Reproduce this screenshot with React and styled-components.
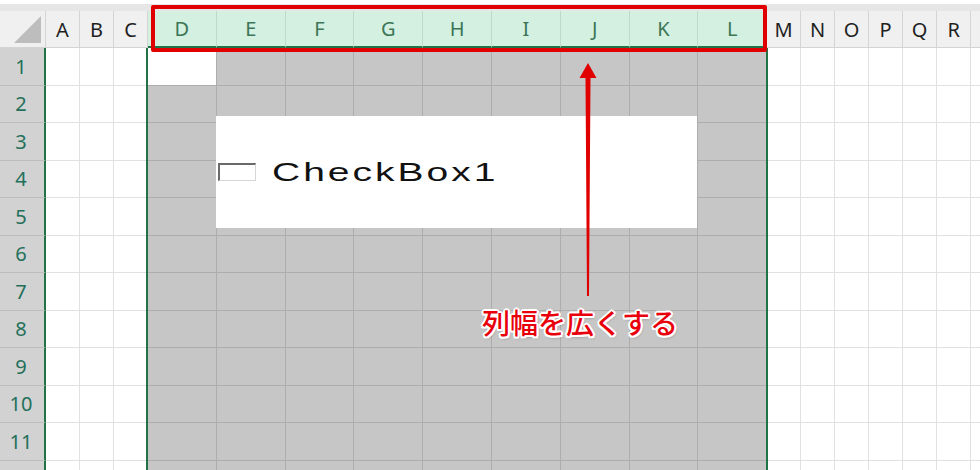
import React from 'react';
import styled, { createGlobalStyle } from 'styled-components';

const GlobalStyle = createGlobalStyle`
  html, body {
    margin: 0;
    padding: 0;
    background: #ffffff;
  }
`;

const Page = styled.div`
  position: relative;
  width: 980px;
  height: 470px;
  overflow: hidden;
  background: #ffffff;
  font-family: "Noto Sans", "Liberation Sans", sans-serif;
`;

const TopStrip = styled.div`
  height: 7px;
  margin-top: 4px;
  background: #e6e6e6;
`;

const Sheet = styled.div`
  display: grid;
  grid-template-columns: 46px repeat(3, 34px) repeat(9, 68.8px) repeat(7, 34px);
  grid-template-rows: 37px repeat(12, 37.5px);
`;

const Corner = styled.div`
  position: relative;
  box-sizing: border-box;
  background: #f0f0f0;
  border-right: 1px solid #d4d4d4;
  border-bottom: 1px solid #d4d4d4;

  &::after {
    content: '';
    position: absolute;
    right: 4px;
    bottom: 4px;
    width: 27px;
    height: 27px;
    background: #bdbdbd;
    clip-path: polygon(100% 0, 100% 100%, 0 100%);
  }
`;

const ColHead = styled.div`
  box-sizing: border-box;
  display: flex;
  align-items: center;
  justify-content: center;
  font-size: 20px;
  background: ${p => (p.$on ? '#d3f0e0' : '#f0f0f0')};
  color: ${p => (p.$on ? '#3c7656' : '#1f1f1f')};
  border-right: 1px solid ${p => (p.$on ? '#bfd9ca' : '#d4d4d4')};
  border-bottom: ${p => (p.$on ? '2px solid #217346' : '1px solid #d4d4d4')};
`;

const RowHead = styled.div`
  box-sizing: border-box;
  display: flex;
  align-items: center;
  justify-content: center;
  padding-right: 2px;
  font-size: 20px;
  background: #d2d2d2;
  color: #23705a;
  border-right: 2px solid #217346;
  border-bottom: 1px solid #bcbcbc;
`;

const Cell = styled.div`
  box-sizing: border-box;
  background: ${p => (p.$active ? '#ffffff' : p.$on ? '#c6c6c6' : '#ffffff')};
  border-right: 1px solid ${p => (p.$on ? '#adadad' : '#e1e1e1')};
  border-bottom: 1px solid ${p => (p.$on ? '#adadad' : '#e1e1e1')};
`;

const SelectionFrame = styled.div`
  position: absolute;
  left: 146px;
  top: 48px;
  width: 622px;
  height: 430px;
  box-sizing: border-box;
  border-left: 2px solid #217346;
  border-right: 2px solid #217346;
  pointer-events: none;
`;

const HighlightBox = styled.div`
  position: absolute;
  left: 151px;
  top: 5px;
  width: 616px;
  height: 47px;
  box-sizing: border-box;
  border: 4px solid #e00000;
  border-radius: 2px;
`;

const CheckControl = styled.div`
  position: absolute;
  left: 216px;
  top: 116px;
  width: 481px;
  height: 112px;
  background: #ffffff;
  display: flex;
  align-items: center;
  padding-left: 2px;
  box-sizing: border-box;
`;

const CheckSquare = styled.span`
  width: 38px;
  height: 18px;
  box-sizing: border-box;
  border-top: 2px solid #6a6a6a;
  border-left: 2px solid #6a6a6a;
  border-right: 1px solid #d6d6d6;
  border-bottom: 1px solid #d6d6d6;
  background: #ffffff;
  flex: none;
`;

const CheckLabel = styled.span`
  margin-left: 16px;
  font-family: "Liberation Sans", Arial, sans-serif;
  font-size: 26px;
  letter-spacing: 2px;
  color: #111111;
  transform: scaleX(1.5);
  transform-origin: left center;
  white-space: nowrap;
`;

const Arrow = styled.svg`
  position: absolute;
  left: 576px;
  top: 60px;
`;

const Callout = styled.div`
  position: absolute;
  left: 482px;
  top: 307px;
  font-family: "Noto Sans CJK JP", "Noto Sans", sans-serif;
  font-size: 28px;
  line-height: 30px;
  font-weight: 500;
  color: #e8000b;
  white-space: nowrap;
  text-shadow:
    -2px 0 0 #fff, 2px 0 0 #fff, 0 -2px 0 #fff, 0 2px 0 #fff,
    -1.5px -1.5px 0 #fff, 1.5px -1.5px 0 #fff, -1.5px 1.5px 0 #fff, 1.5px 1.5px 0 #fff,
    1px 2px 3px rgba(0, 0, 0, 0.35);
`;

const cols = ['A', 'B', 'C', 'D', 'E', 'F', 'G', 'H', 'I', 'J', 'K', 'L', 'M', 'N', 'O', 'P', 'Q', 'R', ''];
const isSel = i => i >= 3 && i <= 11;
const rows = Array.from({ length: 12 }, (_, i) => i + 1);

export default function App() {
  return (
    <Page>
      <GlobalStyle />
      <TopStrip />
      <Sheet>
        <Corner />
        {cols.map((c, i) => (
          <ColHead key={i} $on={isSel(i)}>{c}</ColHead>
        ))}
        {rows.map(r => (
          <React.Fragment key={r}>
            <RowHead>{r < 12 ? r : ''}</RowHead>
            {cols.map((c, i) => (
              <Cell key={i} $on={isSel(i)} $active={r === 1 && i === 3} />
            ))}
          </React.Fragment>
        ))}
      </Sheet>

      <SelectionFrame />
      <HighlightBox />

      <CheckControl>
        <CheckSquare />
        <CheckLabel>CheckBox1</CheckLabel>
      </CheckControl>

      <Arrow width="24" height="240" viewBox="0 0 24 240">
        <polygon
          points="12,3 20.5,18 14.5,18 13,236 11,236 9.5,18 3.5,18"
          fill="#e00000"
        />
      </Arrow>

      <Callout>列幅を広くする</Callout>
    </Page>
  );
}
